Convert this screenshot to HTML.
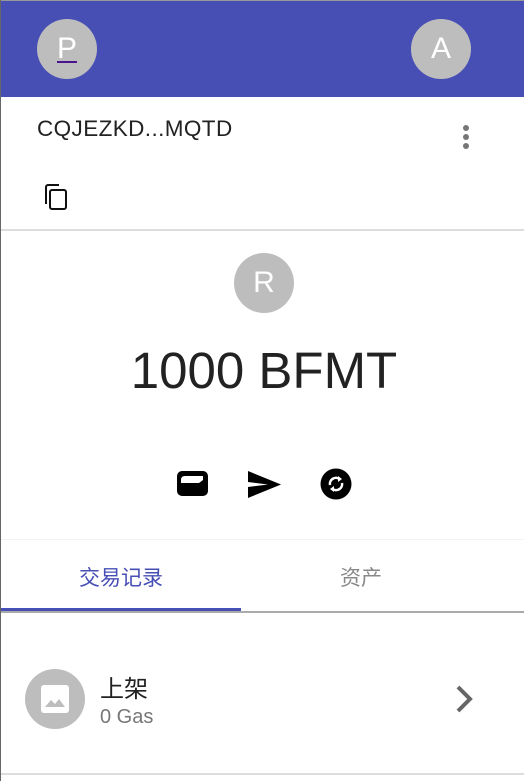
<!DOCTYPE html>
<html><head><meta charset="utf-8"><style>
*{margin:0;padding:0;box-sizing:border-box}
body{width:524px;height:781px;background:#fff;position:relative;overflow:hidden;font-family:"Liberation Sans","Noto Sans CJK SC",sans-serif}
.a{position:absolute}
.av{border-radius:50%;background:#bdbdbd;color:#fff;text-align:center}
</style></head><body>
<div class="a" style="left:0;top:0;width:524px;height:1px;background:#999"></div>
<div class="a" style="left:0;top:0;width:1px;height:781px;background:#666"></div>
<div class="a" style="left:1px;top:1px;width:523px;height:96px;background:#474fb5"></div>
<div class="a av" style="left:37px;top:19px;width:60px;height:60px;font-size:30px;line-height:60px">P</div>
<div class="a" style="left:57px;top:61px;width:20px;height:2px;background:#4a148c"></div>
<div class="a av" style="left:411px;top:19px;width:60px;height:60px;font-size:30px;line-height:60px">A</div>
<div class="a" style="left:37px;top:116px;font-size:22.5px;letter-spacing:0.4px;color:#222">CQJEZKD...MQTD</div>
<div class="a" style="left:463px;top:125px;width:7px;height:24px">
<div style="width:6px;height:6px;border-radius:50%;background:#777;margin-bottom:3px"></div>
<div style="width:6px;height:6px;border-radius:50%;background:#777;margin-bottom:3px"></div>
<div style="width:6px;height:6px;border-radius:50%;background:#777"></div></div>
<svg class="a" style="left:45px;top:184px" width="22" height="26" viewBox="0 0 22 26"><path d="M1 20V3a2 2 0 0 1 2-2h11" fill="none" stroke="#111" stroke-width="2"/><rect x="5" y="6" width="16" height="19" rx="2" fill="none" stroke="#111" stroke-width="2"/></svg>
<div class="a" style="left:1px;top:229px;width:523px;height:2px;background:#ddd"></div>
<div class="a av" style="left:234px;top:253px;width:60px;height:60px;font-size:30px;line-height:60px">R</div>
<div class="a" style="left:0;top:341px;width:528px;text-align:center;font-size:51px;color:#222">1000 BFMT</div>
<svg class="a" style="left:177px;top:471px" width="31" height="26" viewBox="0 0 31 26"><rect x="0" y="0" width="31" height="25" rx="5" fill="#000"/><path d="M4 9Q4 5 8 5H26V9L22 12H4Z" fill="#fff"/></svg>
<svg class="a" style="left:248px;top:471px" width="33" height="27" viewBox="0 0 33 27"><path d="M0 0L33 13.5L0 27V16L20 13.5L0 11Z" fill="#000"/></svg>
<svg class="a" style="left:320px;top:468px" width="32" height="32" viewBox="0 0 32 32"><circle cx="16" cy="16" r="15.5" fill="#000"/><path d="M10 17A6 6 0 0 1 20 11.5M22 15A6 6 0 0 1 12 20.5" fill="none" stroke="#fff" stroke-width="2.5"/><path d="M18 8l4 3-4 3zM14 24l-4-3 4-3z" fill="#fff"/></svg>
<div class="a" style="left:1px;top:539px;width:523px;height:1px;background:#f3f3f3"></div>
<div class="a" style="left:1px;top:562px;width:240px;text-align:center;font-size:21px;color:#474fb5">交易记录</div>
<div class="a" style="left:241px;top:562px;width:240px;text-align:center;font-size:21px;color:#888">资产</div>
<div class="a" style="left:1px;top:608px;width:240px;height:3px;background:#474fb5"></div>
<div class="a" style="left:1px;top:611px;width:523px;height:2px;background:#aaa"></div>
<div class="a av" style="left:25px;top:669px;width:60px;height:60px"></div>
<svg class="a" style="left:41px;top:685px" width="28" height="28" viewBox="0 0 28 28"><rect width="28" height="28" rx="3" fill="#fff"/><path d="M4 22L10 15L14 19L18 14L24 22Z" fill="#bdbdbd"/></svg>
<div class="a" style="left:100px;top:669px;font-size:24px;color:#222">上架</div>
<div class="a" style="left:100px;top:706px;font-size:20px;color:#777">0 Gas</div>
<svg class="a" style="left:455px;top:684px" width="22" height="30" viewBox="0 0 22 30"><path d="M3 3L15 15L3 27" fill="none" stroke="#666" stroke-width="4"/></svg>
<div class="a" style="left:1px;top:773px;width:523px;height:2px;background:#ddd"></div>
</body></html>
